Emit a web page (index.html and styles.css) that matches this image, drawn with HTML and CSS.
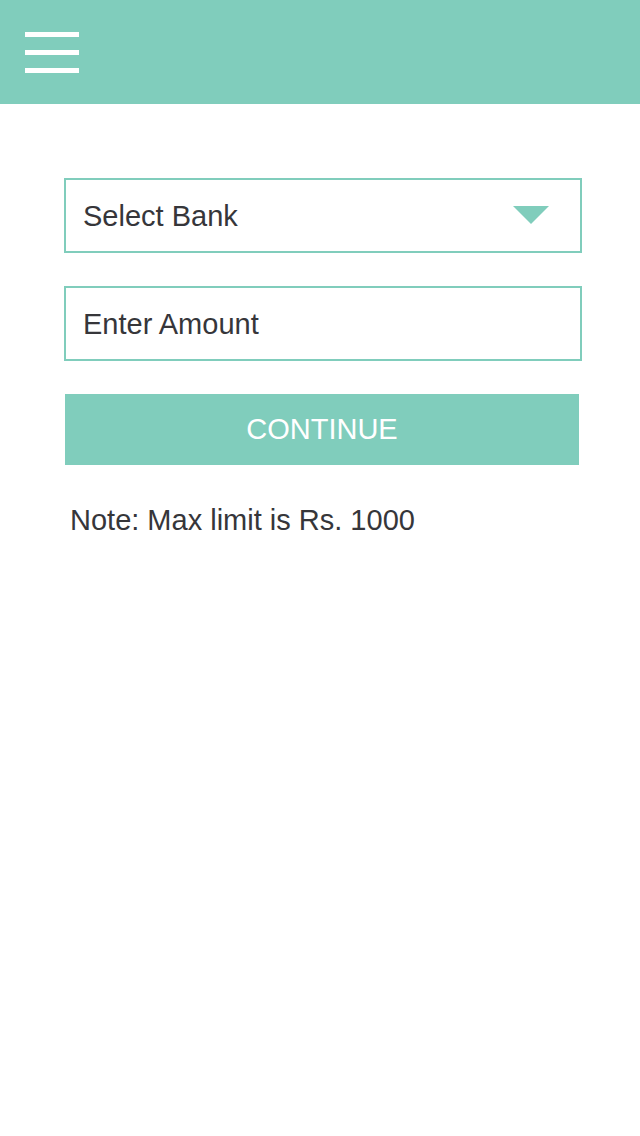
FILE: index.html
```html
<!DOCTYPE html>
<html lang="en">
<head>
<meta charset="utf-8">
<title>Select Bank</title>
<link rel="stylesheet" href="styles.css">
</head>
<body>
<header class="topbar">
  <button class="menu" aria-label="Menu">
    <span class="bar"></span>
    <span class="bar"></span>
    <span class="bar"></span>
  </button>
</header>
<main class="form">
  <div class="field select">
    <span class="label">Select Bank</span>
    <svg class="caret" width="36" height="18" viewBox="0 0 36 18"><polygon points="0,0 36,0 18,18" fill="#80cdbc"/></svg>
  </div>
  <div class="field">
    <span class="label">Enter Amount</span>
  </div>
  <button class="continue">CONTINUE</button>
  <p class="note">Note: Max limit is Rs. 1000</p>
</main>
</body>
</html>
```
FILE: styles.css
```css
html, body {
  margin: 0;
  padding: 0;
  background: #ffffff;
}
body {
  font-family: "Liberation Sans", Arial, sans-serif;
  color: #36363a;
}
.topbar {
  height: 104px;
  background: #80cdbc;
  box-sizing: border-box;
  padding: 32px 0 0 25px;
}
.menu {
  display: flex;
  flex-direction: column;
  gap: 13px;
  padding: 0;
  margin: 0;
  border: 0;
  background: transparent;
}
.bar {
  display: block;
  width: 54px;
  height: 5px;
  background: #ffffff;
}
.form {
  padding: 74px 0 0 64px;
  display: flex;
  flex-direction: column;
  align-items: flex-start;
}
.field {
  box-sizing: border-box;
  width: 518px;
  height: 75px;
  border: 2px solid #80cdbc;
  display: flex;
  align-items: center;
  justify-content: space-between;
  padding: 0 31px 0 17px;
  font-size: 29px;
}
.field + .field {
  margin-top: 33px;
}
.label {
  margin-top: 2px;
}
.caret {
  display: block;
  margin-top: -1px;
}
.continue {
  margin: 33px 0 0 1px;
  width: 514px;
  height: 71px;
  border: 0;
  background: #80cdbc;
  color: #ffffff;
  font-family: "Liberation Sans", Arial, sans-serif;
  font-size: 29px;
  padding: 0;
}
.note {
  margin: 39px 0 0 6px;
  font-size: 29px;
  line-height: 32px;
}
```
